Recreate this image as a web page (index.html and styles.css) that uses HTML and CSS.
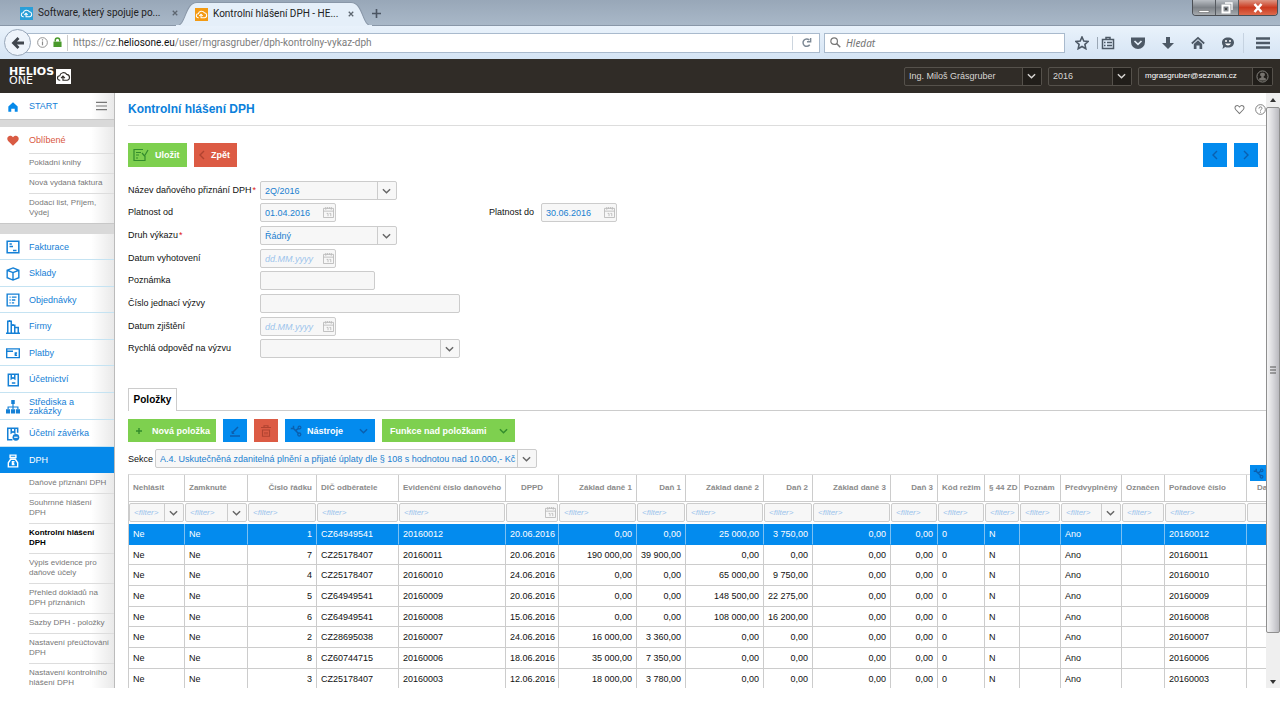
FILE: index.html
```html
<!DOCTYPE html>
<html lang="cs">
<head>
<meta charset="utf-8">
<title>Kontrolní hlášení DPH - HELIOS One</title>
<link rel="stylesheet" href="styles.css">
</head>
<body>
<svg class="defs" aria-hidden="true">
  <symbol id="cloud" viewBox="0 0 14 14"><path d="M4 10.500H3.500a2 2 0 0 1 0-4.200A3.600 3.600 0 0 1 10 5a2.800 2.800 0 0 1 .5 5.500H6.500V7M4.700 8.500l1.800-1.800 1.800 1.800" fill="none" stroke="currentColor" stroke-width="1.100"/></symbol>
  <symbol id="chev" viewBox="0 0 10 6"><path d="M1 1l4 4 4-4" fill="none" stroke="currentColor" stroke-width="1.600"/></symbol>
  <symbol id="cal" viewBox="0 0 12 12"><path d="M.5 1.500h11v10H.5zM.5 4.500h11M3 0v3M9 0v3M5 0v2M7 0v2" fill="none" stroke="currentColor"/><path d="M4 7h1.500v3M7 7h1.500v3" fill="none" stroke="currentColor"/></symbol>
  <symbol id="wrench" viewBox="0 0 12 12"><path d="M.8 3.500h2.700V.8M3.500 3.500L8.500 8.500M5.500 5.500L8.300 3.700" fill="none" stroke="currentColor" stroke-width="1.500"/><circle cx="9.500" cy="2.500" r="1.400" fill="none" stroke="currentColor" stroke-width="1.200"/><circle cx="9.300" cy="9.500" r="1.500" fill="none" stroke="currentColor" stroke-width="1.300"/></symbol>
</svg>

<header class="tabs">
  <div class="tab">
    <span class="fav blue"><svg><use href="#cloud"/></svg></span><span class="tab-name">Software, který spojuje po...</span>
    <button class="x" aria-label="Zavřít panel"><svg viewBox="0 0 8 8"><path d="M1 1l6 6M7 1L1 7" stroke="currentColor" stroke-width="1.700"/></svg></button>
  </div>
  <div class="tab active">
    <svg class="shape" viewBox="0 0 188 24" preserveAspectRatio="none"><path d="M0 24C10 24 8 1 20 .5H168C180 1 178 24 188 24z" fill="#e5eff9" stroke="#8997a8"/><path d="M0 24h188" stroke="#e5eff9" stroke-width="2"/></svg>
    <span class="fav orange"><svg><use href="#cloud"/></svg></span><span class="tab-name">Kontrolní hlášení DPH - HE...</span>
    <button class="x" aria-label="Zavřít panel"><svg viewBox="0 0 8 8"><path d="M1 1l6 6M7 1L1 7" stroke="currentColor" stroke-width="1.700"/></svg></button>
  </div>
  <button class="plus" aria-label="Nový panel"><svg viewBox="0 0 10 10"><path d="M5 0v10M0 5h10" stroke="currentColor" stroke-width="1.800"/></svg></button>
  <div class="win">
    <button class="wb" aria-label="Minimalizovat"><svg viewBox="0 0 12 12"><path d="M1 8.500h10v2H1z" fill="#fff" stroke="#555" stroke-width=".5"/></svg></button>
    <button class="wb" aria-label="Obnovit"><svg viewBox="0 0 12 12"><path d="M4 1h7v7" fill="none" stroke="#fff" stroke-width="1.300"/><path d="M1.500 3.500h7v7h-7z" fill="none" stroke="#fff" stroke-width="2"/><path d="M4 6h2v2H4z" fill="#444"/></svg></button>
    <button class="wb close" aria-label="Zavřít"><svg viewBox="0 0 12 12"><path d="M2.500 2l7 8M9.500 2l-7 8" stroke="#fff" stroke-width="2.500"/></svg></button>
  </div>
</header>

<nav class="toolbar">
  <button class="back" aria-label="Zpět o stránku"><svg viewBox="0 0 14 14"><path d="M7.500 2L2.500 7l5 5M3 7h10" fill="none" stroke="currentColor" stroke-width="2.800"/></svg></button>
  <div class="url">
    <svg class="info" viewBox="0 0 12 12"><circle cx="6" cy="6" r="5.300" fill="none" stroke="#8a8a8a"/><path d="M6 5v4M6 2.500v1.400" stroke="#8a8a8a" stroke-width="1.300"/></svg>
    <svg class="lock" viewBox="0 0 10 12"><path d="M.5 5h9v6h-9z" fill="#4a9a2c"/><path d="M2.500 5V3.500a2.500 2.500 0 0 1 5 0V5" fill="none" stroke="#4a9a2c" stroke-width="1.600"/></svg>
    <span class="addr">https://cz.<b>heliosone.eu</b>/user/mgrasgruber/dph-kontrolny-vykaz-dph</span>
    <button class="reload" aria-label="Znovu načíst"><svg viewBox="0 0 12 12"><path d="M9.500 8.500A4 4 0 1 1 9 3.300M10.500 1v4.200H6.500" fill="none" stroke="currentColor" stroke-width="1.600"/></svg></button>
  </div>
  <label class="search"><svg viewBox="0 0 12 12"><circle cx="4.500" cy="4.500" r="3.600" fill="none" stroke="#777" stroke-width="1.300"/><path d="M7.200 7.200l4 4" stroke="#777" stroke-width="1.600"/></svg><input type="search" placeholder="Hledat" aria-label="Hledat"></label>
  <div class="tools">
    <button aria-label="Záložka"><svg viewBox="0 0 14 14"><path d="M7 1l1.800 4 4.300.5-3.200 2.900.9 4.300L7 10.500l-3.800 2.200.9-4.300L.9 5.500 5.200 5z" fill="none" stroke="currentColor" stroke-width="1.600"/></svg></button>
    <button class="sep" aria-label="Seznam záložek"><svg viewBox="0 0 14 14"><path d="M1.500 3.500h11v9h-11zM5 3V1.500h4V3M3 6.500h1.500M6 6.500h5M3 9.500h1.500M6 9.500h5" fill="none" stroke="currentColor" stroke-width="1.500"/></svg></button>
    <button aria-label="Pocket"><svg viewBox="0 0 14 14"><path d="M0 1.500h14V6a7 7 0 0 1-14 0z" fill="currentColor"/><path d="M3.500 5L7 8.300 10.500 5" fill="none" stroke="#e5eff9" stroke-width="1.700"/></svg></button>
    <button aria-label="Stahování"><svg viewBox="0 0 14 14"><path d="M5 1h4v6h4l-6 6-6-6h4z" fill="currentColor"/></svg></button>
    <button aria-label="Domů"><svg viewBox="0 0 14 14"><path d="M.8 7.500L7 1.800l6.200 5.700" fill="none" stroke="currentColor" stroke-width="1.700"/><path d="M2.800 8L7 4.300 11.200 8v5H8.500V9.500h-3V13H2.800z" fill="currentColor"/></svg></button>
    <button aria-label="Hello"><svg viewBox="0 0 14 14"><path d="M7 1.500c3.500 0 6 2 6 5s-2.500 5-6 5c-1 0-2-.1-2.800-.5L1.500 13l.6-3.300A4.500 4.500 0 0 1 1 6.500c0-3 2.500-5 6-5z" fill="currentColor"/><circle cx="5" cy="5" r="1" fill="#fff"/><circle cx="9" cy="5" r="1" fill="#fff"/><path d="M4 7.500c1.500 2.500 4.500 2.500 6 0z" fill="#fff"/></svg></button>
    <button class="menu" aria-label="Nabídka"><svg viewBox="0 0 14 14"><path d="M0 2.500h14M0 7h14M0 11.500h14" stroke="currentColor" stroke-width="2.600"/></svg></button>
  </div>
</nav>

<div class="appbar">
  <div class="logo"><div><span>HELIOS</span><span class="one">ONE</span></div><i><svg><use href="#cloud"/></svg></i></div>
  <span class="dark firm"><select aria-label="Firma"><option>Ing. Miloš Grásgruber</option></select><svg><use href="#chev"/></svg></span>
  <span class="dark year"><select aria-label="Rok"><option>2016</option></select><svg><use href="#chev"/></svg></span>
  <button class="user"><span>mgrasgruber@seznam.cz</span><svg viewBox="0 0 14 14"><circle cx="7" cy="7" r="6" fill="none" stroke="#8d8a86"/><path d="M7 3a2 2 0 0 1 1.300 3.800V8l2.700 1.500-1 1.700H4l-1-1.700L5.700 8V6.800A2 2 0 0 1 7 3z" fill="#77746f"/></svg></button>
</div>

<div class="work">
  <aside class="side">
    <a class="item start" href="#"><svg viewBox="0 0 12 12"><path d="M6 2l4 3.500V10H7.500V7.500h-3V10H2V5.500z" fill="#0589ea"/></svg>START<svg class="burger" viewBox="0 0 12 10"><path d="M0 1h12M0 5h12M0 9h12" stroke="#777" stroke-width="1.200"/></svg></a>
    <div class="band"></div>
    <a class="item fav-head" href="#"><svg viewBox="0 0 12 12"><path d="M6 10L1.800 6C-.5 3 3.300-.5 6 2.800 8.700-.5 12.500 3 10.200 6z" fill="#d95b43"/></svg>Oblíbené</a>
    <a class="sub first" href="#">Pokladní knihy</a>
    <a class="sub" href="#">Nová vydaná faktura</a>
    <a class="sub" href="#">Dodací list, Příjem,<br>Výdej</a>
    <div class="band tall"></div>
    <a class="item" href="#"><svg viewBox="0 0 12 12"><path d="M1 1h10v10H1zM3 3.500h2M3 5.500h3M6 9h3" fill="none" stroke="currentColor" stroke-width="1.300"/></svg>Fakturace</a>
    <a class="item t" href="#"><svg viewBox="0 0 12 12"><path d="M6 .8l5 2v6.400l-5 2-5-2V2.800zM1 2.800l5 2 5-2M6 4.800v6.400" fill="none" stroke="currentColor" stroke-width="1.200"/></svg>Sklady</a>
    <a class="item" href="#"><svg viewBox="0 0 12 12"><path d="M1 1h10v10H1zM3 3.500h1M5 3.500h4M3 6h1M5 6h3M3 8.500h1M5 8.500h2" fill="none" stroke="currentColor" stroke-width="1.200"/></svg>Objednávky</a>
    <a class="item t" href="#"><svg viewBox="0 0 12 12"><path d="M0 11.300h12M1.500 11V1h3v10M4.500 4.500h3V11M7.500 6.500h3V11M3 0v1M6 3.500v1" fill="none" stroke="currentColor" stroke-width="1.300"/></svg>Firmy</a>
    <a class="item" href="#"><svg viewBox="0 0 12 12"><path d="M.6 2.500h10.800v7.500H.6zM0 4.500h6M9.500 6H8v2h1.500M7.300 7H9" fill="none" stroke="currentColor" stroke-width="1.200"/></svg>Platby</a>
    <a class="item t" href="#"><svg viewBox="0 0 12 12"><path d="M2 1h8.500v10H2zM4.500 1v4l1.500-1 1.500 1V1M5 8.500h3" fill="none" stroke="currentColor" stroke-width="1.300"/></svg>Účetnictví</a>
    <a class="item t two" href="#"><svg viewBox="0 0 12 12"><path d="M4.500 0h3v3.500h-3zM0 8h3.500v3.500H0zM4.300 8h3.500v3.500H4.300zM8.500 8H12v3.500H8.500z" fill="currentColor"/><path d="M6 3v5M1.800 8V6h8.400v2" fill="none" stroke="currentColor"/></svg>Střediska a zakázky</a>
    <a class="item t" href="#"><svg viewBox="0 0 12 12"><path d="M5.500 11H1.500V1H10v4M4.500 1v4L6 4l1.500 1V1" fill="none" stroke="currentColor" stroke-width="1.300"/><circle cx="8.500" cy="8.800" r="2.900" fill="currentColor"/><path d="M7 8.800h3" stroke="#fff"/></svg>Účetní závěrka</a>
    <a class="item on" href="#"><svg viewBox="0 0 12 12"><path d="M3.500 1h5v2h-5zM4 4.500h4l2 3V11H2V7.500zM7.300 6.500H5.500v2.500h1.800M5 7.800h2" fill="none" stroke="currentColor" stroke-width="1.200"/></svg>DPH</a>
    <a class="sub first" href="#">Daňové přiznání DPH</a>
    <a class="sub" href="#">Souhrnné hlášení<br>DPH</a>
    <a class="sub cur" href="#">Kontrolní hlášení DPH</a>
    <a class="sub" href="#">Výpis evidence pro daňové účely</a>
    <a class="sub" href="#">Přehled dokladů na DPH přiznáních</a>
    <a class="sub" href="#">Sazby DPH - položky</a>
    <a class="sub" href="#">Nastavení přeúčtování<br>DPH</a>
    <a class="sub" href="#">Nastavení kontrolního hlášení DPH</a>
  </aside>

  <main class="main">
    <div class="title"><h1>Kontrolní hlášení DPH</h1>
      <button aria-label="Oblíbené"><svg viewBox="0 0 12 12"><path d="M6 10.500L1.800 6C-.5 3 3.300-.2 6 3.300 8.700-.2 12.500 3 10.200 6z" fill="none" stroke="currentColor" stroke-width="1.100"/></svg></button>
      <button aria-label="Nápověda"><svg viewBox="0 0 12 12"><circle cx="6" cy="6" r="5.300" fill="none" stroke="currentColor"/><path d="M4.300 5c0-2.500 3.400-2.300 3.400-.4C7.700 5.800 6 5.800 6 7.300M6 8.300v1.200" fill="none" stroke="currentColor"/></svg></button>
    </div>
    <div class="actions">
      <button class="btn green save"><svg viewBox="0 0 16 14"><path d="M12 8v4.500H1v-11h9M3 4.500h5M3 7h3M3 10h2M9 5l2.500 3L15 2" fill="none" stroke="currentColor" stroke-width="1.200"/></svg>Uložit</button>
      <button class="btn red ret"><svg viewBox="0 0 6 10"><path d="M5 1L1 5l4 4" fill="none" stroke="currentColor" stroke-width="1.400"/></svg>Zpět</button>
      <span class="grow"></span>
      <button class="btn azure sq" aria-label="Předchozí"><svg viewBox="0 0 6 10"><path d="M5 1L1 5l4 4" fill="none" stroke="currentColor" stroke-width="1.400"/></svg></button>
      <button class="btn azure sq" aria-label="Další"><svg viewBox="0 0 6 10"><path d="M1 1l4 4-4 4" fill="none" stroke="currentColor" stroke-width="1.400"/></svg></button>
    </div>

    <form class="form">
      <label for="f1">Název daňového přiznání DPH<em>*</em></label>
      <span class="sel mid"><select id="f1"><option>2Q/2016</option></select><svg><use href="#chev"/></svg></span>
      <label class="c1" for="f2">Platnost od</label>
      <span class="date"><input id="f2" value="01.04.2016"><svg><use href="#cal"/></svg></span>
      <label for="f3">Platnost do</label>
      <span class="date"><input id="f3" value="30.06.2016"><svg><use href="#cal"/></svg></span>
      <label class="c1" for="f4">Druh výkazu<em>*</em></label>
      <span class="sel mid"><select id="f4"><option>Řádný</option></select><svg><use href="#chev"/></svg></span>
      <label class="c1" for="f5">Datum vyhotovení</label>
      <span class="date"><input id="f5" placeholder="dd.MM.yyyy"><svg><use href="#cal"/></svg></span>
      <label class="c1" for="f6">Poznámka</label>
      <input class="text short" id="f6">
      <label class="c1" for="f7">Číslo jednací výzvy</label>
      <input class="text" id="f7">
      <label class="c1" for="f8">Datum zjištění</label>
      <span class="date"><input id="f8" placeholder="dd.MM.yyyy"><svg><use href="#cal"/></svg></span>
      <label class="c1" for="f9">Rychlá odpověď na výzvu</label>
      <span class="sel long"><select id="f9"><option></option></select><svg><use href="#chev"/></svg></span>
    </form>

    <div class="tabline"><button class="tabbtn">Položky</button></div>
    <div class="gridbar">
      <button class="btn green new"><svg viewBox="0 0 8 8"><path d="M4 1v6M1 4h6" stroke="currentColor" stroke-width="1.400"/></svg>Nová položka</button>
      <button class="btn azure sq" aria-label="Upravit"><svg class="i12" viewBox="0 0 12 12"><path d="M1 11h10M3.500 7.500L9 2" fill="none" stroke="currentColor" stroke-width="1.500"/><path d="M3 6.500l2 2H3z" fill="currentColor" stroke="currentColor"/></svg></button>
      <button class="btn red sq" aria-label="Smazat"><svg class="i12" viewBox="0 0 12 12"><path d="M1 2.500h10M4 2V.7h4V2M2.500 5h7v6.300h-7zM5 7v2.500M7 7v2.500" fill="none" stroke="currentColor" stroke-width="1.100"/></svg></button>
      <button class="btn azure tool"><svg class="i12"><use href="#wrench"/></svg>Nástroje<svg class="dn"><use href="#chev"/></svg></button>
      <button class="btn green func">Funkce nad položkami<svg class="dn"><use href="#chev"/></svg></button>
    </div>
    <div class="section"><label for="sec">Sekce</label><span class="sel"><select id="sec"><option>A.4. Uskutečněná zdanitelná plnění a přijaté úplaty dle § 108 s hodnotou nad 10.000,- Kč</option></select><svg><use href="#chev"/></svg></span></div>

    <div class="gridwrap">
      <button class="cfg" aria-label="Nastavení tabulky"><svg><use href="#wrench"/></svg></button>
      <div class="clip">
      <table>
        <colgroup><col class="w56"><col class="w63"><col class="w69"><col class="w82"><col class="w107"><col class="w53"><col class="w78"><col class="w49"><col class="w78"><col class="w49"><col class="w78"><col class="w47"><col class="w47"><col class="w35"><col class="w41"><col class="w61"><col class="w43"><col class="w82"><col class="w56"></colgroup>
        <thead>
          <tr class="head"><th>Nehlásit</th><th>Zamknuté</th><th class="r">Číslo řádku</th><th>DIČ odběratele</th><th>Evidenční číslo daňového</th><th class="c">DPPD</th><th class="r">Základ daně 1</th><th class="r">Daň 1</th><th class="r">Základ daně 2</th><th class="r">Daň 2</th><th class="r">Základ daně 3</th><th class="r">Daň 3</th><th>Kód režim</th><th>§ 44 ZD</th><th>Poznám</th><th>Předvyplněný</th><th>Označen</th><th>Pořadové číslo</th><th class="last">Da</th></tr>
          <tr class="filter">
            <td><span class="sel"><select aria-label="Filtr Nehlásit"><option>&lt;filter&gt;</option></select><svg><use href="#chev"/></svg></span></td>
            <td><span class="sel"><select aria-label="Filtr Zamknuté"><option>&lt;filter&gt;</option></select><svg><use href="#chev"/></svg></span></td>
            <td><input placeholder="&lt;filter&gt;" aria-label="Filtr Číslo řádku"></td>
            <td><input placeholder="&lt;filter&gt;" aria-label="Filtr DIČ"></td>
            <td><input placeholder="&lt;filter&gt;" aria-label="Filtr Evidenční číslo"></td>
            <td><span class="date"><input aria-label="Filtr DPPD"><svg><use href="#cal"/></svg></span></td>
            <td><input placeholder="&lt;filter&gt;" aria-label="Filtr Základ daně 1"></td>
            <td><input placeholder="&lt;filter&gt;" aria-label="Filtr Daň 1"></td>
            <td><input placeholder="&lt;filter&gt;" aria-label="Filtr Základ daně 2"></td>
            <td><input placeholder="&lt;filter&gt;" aria-label="Filtr Daň 2"></td>
            <td><input placeholder="&lt;filter&gt;" aria-label="Filtr Základ daně 3"></td>
            <td><input placeholder="&lt;filter&gt;" aria-label="Filtr Daň 3"></td>
            <td><input placeholder="&lt;filter&gt;" aria-label="Filtr Kód režimu"></td>
            <td><input placeholder="&lt;filter&gt;" aria-label="Filtr § 44"></td>
            <td><input placeholder="&lt;filter&gt;" aria-label="Filtr Poznámka"></td>
            <td><span class="sel"><select aria-label="Filtr Předvyplněný"><option>&lt;filter&gt;</option></select><svg><use href="#chev"/></svg></span></td>
            <td><input placeholder="&lt;filter&gt;" aria-label="Filtr Označení"></td>
            <td><input placeholder="&lt;filter&gt;" aria-label="Filtr Pořadové číslo"></td>
            <td><input aria-label="Filtr Datum"></td>
          </tr>
        </thead>
        <tbody>
          <tr class="picked"><td>Ne</td><td>Ne</td><td class="r">1</td><td>CZ64949541</td><td>20160012</td><td>20.06.2016</td><td class="r">0,00</td><td class="r">0,00</td><td class="r">25 000,00</td><td class="r">3 750,00</td><td class="r">0,00</td><td class="r">0,00</td><td>0</td><td>N</td><td></td><td>Ano</td><td></td><td>20160012</td><td></td></tr>
          <tr><td>Ne</td><td>Ne</td><td class="r">7</td><td>CZ25178407</td><td>20160011</td><td>20.06.2016</td><td class="r">190 000,00</td><td class="r">39 900,00</td><td class="r">0,00</td><td class="r">0,00</td><td class="r">0,00</td><td class="r">0,00</td><td>0</td><td>N</td><td></td><td>Ano</td><td></td><td>20160011</td><td></td></tr>
          <tr><td>Ne</td><td>Ne</td><td class="r">4</td><td>CZ25178407</td><td>20160010</td><td>24.06.2016</td><td class="r">0,00</td><td class="r">0,00</td><td class="r">65 000,00</td><td class="r">9 750,00</td><td class="r">0,00</td><td class="r">0,00</td><td>0</td><td>N</td><td></td><td>Ano</td><td></td><td>20160010</td><td></td></tr>
          <tr><td>Ne</td><td>Ne</td><td class="r">5</td><td>CZ64949541</td><td>20160009</td><td>20.06.2016</td><td class="r">0,00</td><td class="r">0,00</td><td class="r">148 500,00</td><td class="r">22 275,00</td><td class="r">0,00</td><td class="r">0,00</td><td>0</td><td>N</td><td></td><td>Ano</td><td></td><td>20160009</td><td></td></tr>
          <tr><td>Ne</td><td>Ne</td><td class="r">6</td><td>CZ64949541</td><td>20160008</td><td>15.06.2016</td><td class="r">0,00</td><td class="r">0,00</td><td class="r">108 000,00</td><td class="r">16 200,00</td><td class="r">0,00</td><td class="r">0,00</td><td>0</td><td>N</td><td></td><td>Ano</td><td></td><td>20160008</td><td></td></tr>
          <tr><td>Ne</td><td>Ne</td><td class="r">2</td><td>CZ28695038</td><td>20160007</td><td>24.06.2016</td><td class="r">16 000,00</td><td class="r">3 360,00</td><td class="r">0,00</td><td class="r">0,00</td><td class="r">0,00</td><td class="r">0,00</td><td>0</td><td>N</td><td></td><td>Ano</td><td></td><td>20160007</td><td></td></tr>
          <tr><td>Ne</td><td>Ne</td><td class="r">8</td><td>CZ60744715</td><td>20160006</td><td>18.06.2016</td><td class="r">35 000,00</td><td class="r">7 350,00</td><td class="r">0,00</td><td class="r">0,00</td><td class="r">0,00</td><td class="r">0,00</td><td>0</td><td>N</td><td></td><td>Ano</td><td></td><td>20160006</td><td></td></tr>
          <tr><td>Ne</td><td>Ne</td><td class="r">3</td><td>CZ25178407</td><td>20160003</td><td>12.06.2016</td><td class="r">18 000,00</td><td class="r">3 780,00</td><td class="r">0,00</td><td class="r">0,00</td><td class="r">0,00</td><td class="r">0,00</td><td>0</td><td>N</td><td></td><td>Ano</td><td></td><td>20160003</td><td></td></tr>
        </tbody>
      </table>
      </div>
    </div>
  </main>
  <div class="scroll" aria-hidden="true">
    <svg class="arr" viewBox="0 0 14 14"><path d="M4 9l3-4 3 4z" fill="#333"/></svg>
    <div class="thumb"><svg viewBox="0 0 6 8"><path d="M0 1h6M0 4h6M0 7h6" stroke="#555"/></svg></div>
    <span></span>
    <svg class="arr" viewBox="0 0 14 14"><path d="M4 6h6l-3 4z" fill="#333"/></svg>
  </div>
</div>
</body>
</html>
```
FILE: styles.css
```css
* { box-sizing: border-box; }
body {
  margin: 0;
  height: 100vh;
  padding-bottom: 32px;
  display: flex;
  flex-direction: column;
  overflow: hidden;
  background: #fff;
  color: #111;
  font: 9px/10px "Liberation Sans", Arial, sans-serif;
}
button, input, select { font: inherit; color: inherit; border: 0; padding: 0; margin: 0; background: none; border-radius: 0; outline: 0; min-width: 0; }
select { appearance: none; }
input[type="search"] { appearance: none; }
a { color: inherit; text-decoration: none; }
svg { display: block; flex: none; }
.defs { position: absolute; width: 0; height: 0; }

/* browser chrome */
.tabs {
  flex: none;
  height: 26px;
  display: flex;
  align-items: flex-end;
  background: linear-gradient(#98a7b8, #a9b8c8);
  border-bottom: 1px solid #8997a8;
  font: 10px/24px Roboto, sans-serif;
  color: #222;
}
.tab { height: 24px; width: 187px; display: flex; align-items: center; padding: 0 4px 0 20px; position: relative; }
.tab.active { width: 180px; padding: 0 8px; margin-bottom: -1px; }
.shape { position: absolute; left: -11px; top: 0; width: 196px; height: 24px; }
.fav { width: 13px; height: 13px; margin-right: 5px; color: #fff; position: relative; }
.fav svg, .logo svg { width: 100%; height: 100%; }
.blue { background: #2a9fd8; }
.orange { background: #f39a12; }
.tab-name { flex: 1; white-space: nowrap; position: relative; }
.x { width: 8px; height: 24px; color: #5d6670; position: relative; margin-right: 3px; }
.x svg { width: 6px; height: 6px; }
.plus { height: 24px; margin-left: 5px; color: #4b5562; }
.plus svg { width: 9px; height: 9px; }
.win { margin: 0 2px 0 auto; align-self: flex-start; display: flex; border: 1px solid #4b4f55; border-top: 0; border-radius: 0 0 4px 4px; overflow: hidden; height: 16px; }
.wb { width: 23px; display: grid; place-items: center; background: linear-gradient(#b9bec4, #7d8288 50%, #a5a9ad); border-right: 1px solid #565a60; }
.wb svg { width: 12px; height: 12px; }
.close { width: 38px; border: 0; background: linear-gradient(#dd9684, #cb3a20 50%, #de6a4c); }
.toolbar { flex: none; height: 33px; display: flex; align-items: center; background: linear-gradient(#e9f2fb, #d5e4f4); padding: 0 10px 0 4px; font: 10px/16px Roboto, sans-serif; }
.back { width: 27px; height: 27px; border-radius: 50%; background: #eef4fb; border: 1px solid #97a6b8; display: grid; place-items: center; color: #40464e; z-index: 1; }
.back svg { width: 14px; height: 14px; }
.url { flex: 1; height: 20px; margin-left: -5px; padding-left: 10px; background: #fff; border: 1px solid #a9bacd; display: flex; align-items: center; }
.info { width: 11px; height: 11px; }
.lock { width: 9px; height: 11px; margin: 0 5px; }
.addr { flex: 1; border-left: 1px solid #ccc; padding-left: 5px; color: #7c7c7c; white-space: nowrap; }
.addr b { font-weight: 400; color: #111; }
.reload { width: 27px; height: 14px; border-left: 1px solid #ccd5de; display: grid; place-items: center; color: #7e8a96; }
.reload svg { width: 11px; height: 11px; }
.search { width: 241px; height: 20px; margin-left: 4px; padding-left: 5px; display: flex; align-items: center; gap: 5px; background: #fff; border: 1px solid #a9bacd; font: italic 10px/16px "Noto Sans", sans-serif; }
.search svg { width: 11px; height: 11px; }
.search input { flex: 1; }
.search input::placeholder { color: #757575; }
.tools { flex: none; display: flex; margin-left: 3px; color: #4d5966; }
.tools button { width: 30px; height: 20px; display: grid; place-items: center; }
.tools svg { width: 14px; height: 14px; }
.tools button:first-child { width: 28px; }
.tools .sep { width: 24px; margin-right: 3px; position: relative; }
.tools .sep::before { content: ""; position: absolute; left: 1px; top: 4px; height: 12px; width: 1px; background: #9aa7b5; }
.tools .menu { width: 27px; justify-content: end; border-left: 1px solid #c6d3e1; }

/* application bar */
.appbar { flex: none; height: 34px; background: #302c27; display: flex; align-items: center; padding: 0 7px 0 9px; gap: 6px; color: #d8d6d3; }
.logo { display: flex; align-items: center; gap: 2px; margin-right: auto; color: #fff; font: bold 11px/9px "DejaVu Sans", sans-serif; }
.logo span { display: block; }
.logo .one { font-weight: 400; }
.logo i { width: 15px; height: 15px; background: #fff; color: #302c27; }
.dark { display: grid; grid-template-columns: 1fr 19px; height: 19px; border: 1px solid #55514b; border-radius: 2px; align-items: center; }
.dark select { grid-area: 1 / 1 / 2 / 3; width: 100%; height: 17px; padding-left: 4px; background: linear-gradient(to left, #211e1a 18px, #55514b 18px, #55514b 19px, transparent 19px); }
.dark option { color: #111; }
.dark svg { grid-area: 1 / 2; width: 9px; height: 6px; justify-self: center; pointer-events: none; }
.firm { width: 138px; }
.year { width: 84px; }
.user { width: 135px; height: 19px; border: 1px solid #55514b; border-radius: 2px; display: flex; align-items: center; color: #fff; font-size: 8px; }
.user span { flex: 1; padding-left: 6px; text-align: left; }
.user svg { width: 20px; height: 17px; padding: 2px; border-left: 1px solid #55514b; background: #211e1a; }

/* workspace */
.work { flex: 1; min-height: 0; display: flex; overflow: hidden; }
.side { width: 115px; flex: none; overflow: hidden; border-right: 1px solid #bbb; background: linear-gradient(to right, #fff 80%, #e9e9e9); }
.item { display: flex; align-items: center; height: 26px; padding: 1px 7px 0 6px; color: #1480d6; border-bottom: 1px solid #c5e3f2; line-height: 9px; }
.item.t { height: 27px; }
.item svg { width: 14px; height: 14px; margin-right: 9px; }
.item.start, .item.fav-head { border-bottom: 0; }
.item .burger { width: 11px; height: 10px; margin: 0 0 2px auto; }
.item.fav-head { color: #d9573f; }
.item.two { padding-right: 24px; }
.item.on { background: #0589ea; color: #fff; border: 0; }
.band { height: 8px; background: #d9d9d9; border-top: 1px solid #c8c8c8; }
.band.tall { height: 11px; }
.sub { display: block; margin-left: 29px; padding: 4px 4px 5px 0; border-top: 1px solid #ddd; font-size: 8px; line-height: 10px; color: #777; }
.cur { font-weight: 700; color: #000; }
.on + .sub { border-color: transparent; }

.main { flex: 1; min-width: 0; padding-left: 13px; overflow: hidden; }
.title { height: 33px; display: flex; align-items: center; gap: 10px; border-bottom: 1px solid #ddd; color: #777; }
h1 { flex: 1; margin: 0; font-size: 12px; line-height: 14px; color: #0b80db; }
.title svg { width: 11px; height: 11px; }
.actions { display: flex; gap: 7px; margin-top: 17px; padding-right: 8px; }
.grow { flex: 1; }
.btn { height: 24px; display: flex; align-items: center; color: #fff; font-weight: 700; white-space: nowrap; }
.green { background: #7ed04f; }
.red { background: #dc5b44; }
.azure { background: #038bee; }
.green svg { color: #338c2c; }
.red svg { color: #b04330; }
.azure svg { color: #0b5fae; }
.save { width: 59px; padding-left: 5px; gap: 6px; }
.save svg { width: 16px; height: 14px; }
.ret { width: 43px; padding-left: 5px; gap: 6px; }
.ret svg, .sq svg { width: 6px; height: 10px; }
.sq { width: 24px; justify-content: center; }
.btn .i12 { width: 12px; height: 12px; }

.form { margin-top: 14px; display: grid; grid-template-columns: 132px 229px 52px 1fr; grid-template-rows: 22px 23px 23px 22px 23px 23px 22px 23px; }
.form label { line-height: 19px; white-space: nowrap; }
.form .c1 { grid-column: 1; }
em { color: #e02020; font-style: normal; margin-left: 1px; }
.sel, .date { display: grid; grid-template-columns: 1fr 19px; align-items: center; height: 19px; background: #f7f7f7; border: 1px solid #ccc; border-radius: 2px; color: #1a80d0; }
.sel select { grid-area: 1 / 1 / 2 / 3; width: 100%; height: 17px; padding-left: 4px; background: linear-gradient(to left, transparent 18px, #ccc 18px, #ccc 19px, transparent 19px); }
.sel svg { grid-area: 1 / 2; width: 9px; height: 6px; justify-self: center; color: #666; pointer-events: none; }
.mid { width: 137px; }
.long { width: 200px; }
.date { width: 76px; }
.date input { width: 100%; padding-left: 4px; grid-area: 1 / 1 / 2 / 3; }
.date svg { grid-area: 1 / 2; width: 11px; height: 11px; justify-self: end; margin-right: 1px; color: #bbb; pointer-events: none; }
input::placeholder { color: #9cc4ec; font-style: italic; opacity: 1; }
.text { width: 200px; height: 19px; background: #f7f7f7; border: 1px solid #ccc; border-radius: 2px; padding: 0 4px; }
.short { width: 115px; }

.tabline { margin-top: 26px; border-bottom: 1px solid #ccc; height: 23px; }
.tabbtn { width: 49px; height: 23px; border: 1px solid #ccc; border-bottom: 0; background: #fff; font-size: 10px; font-weight: 700; color: #000; }
.gridbar { display: flex; gap: 7px; margin-top: 8px; }
.gridbar .btn { height: 23px; }
.new { width: 88px; padding-left: 7px; gap: 9px; }
.new svg { width: 8px; height: 8px; }
.tool { width: 90px; padding: 0 7px 0 5px; gap: 5px; }
.func { width: 133px; padding: 0 7px 0 8px; }
.btn .dn { width: 9px; height: 6px; margin-left: auto; }
.section { display: flex; align-items: center; gap: 2px; margin: 7px 0 6px; }
.section .sel { width: 382px; }

.gridwrap { position: relative; }
.cfg { position: absolute; right: 0; top: -9px; width: 16px; height: 16px; background: #038bee; color: #0b5fae; display: grid; place-items: center; z-index: 1; }
.cfg svg { width: 11px; height: 11px; }
.clip { overflow: hidden; }
table { table-layout: fixed; width: 1175px; border-spacing: 0; border-left: 1px solid #ccc; border-top: 1px solid #ddd; }
.w56 { width: 56px; } .w63 { width: 63px; } .w69 { width: 69px; } .w82 { width: 82px; } .w107 { width: 107px; }
.w53 { width: 53px; } .w78 { width: 78px; } .w49 { width: 49px; } .w47 { width: 47px; } .w35 { width: 35px; }
.w41 { width: 41px; } .w61 { width: 61px; } .w43 { width: 43px; }
th, td { padding: 0 4px; border-right: 1px solid #ccc; border-bottom: 1px solid #ccc; text-align: left; white-space: nowrap; overflow: hidden; }
.r { text-align: right; }
.c { text-align: center; }
.head { height: 27px; }
th { font-size: 8px; color: #8b8b8b; }
.head .last { padding-left: 10px; }
.filter { height: 22px; }
.filter td { padding: 1px 0; border-bottom-color: #fff; border-right-color: #fff; }
.filter td > * { width: 100%; height: 19px; display: grid; }
.filter td > input { display: block; padding-left: 4px; background: #f7f7f7; border: 1px solid #ccc; border-radius: 2px; }
.filter, .filter input::placeholder { font-size: 8px; }
.filter .sel { font-style: italic; color: #9cc4ec; }
tbody tr { height: 21px; }
tbody tr:nth-child(3n+2) { height: 20px; }
.picked td { background: #038bee; color: #fff; border-color: #7cc0f2; border-bottom-color: #038bee; }

.scroll { flex: none; width: 14px; display: flex; flex-direction: column; background: #efefef; }
.scroll .arr { width: 14px; height: 14px; }
.thumb { flex: 526; border: 1px solid #8f8f8f; border-radius: 2px; background: linear-gradient(to right, #f4f4f4, #d8d8dc 50%, #b9b9be); display: grid; place-items: center; }
.thumb svg { width: 6px; height: 8px; }
.scroll span { flex: 41; }
```
